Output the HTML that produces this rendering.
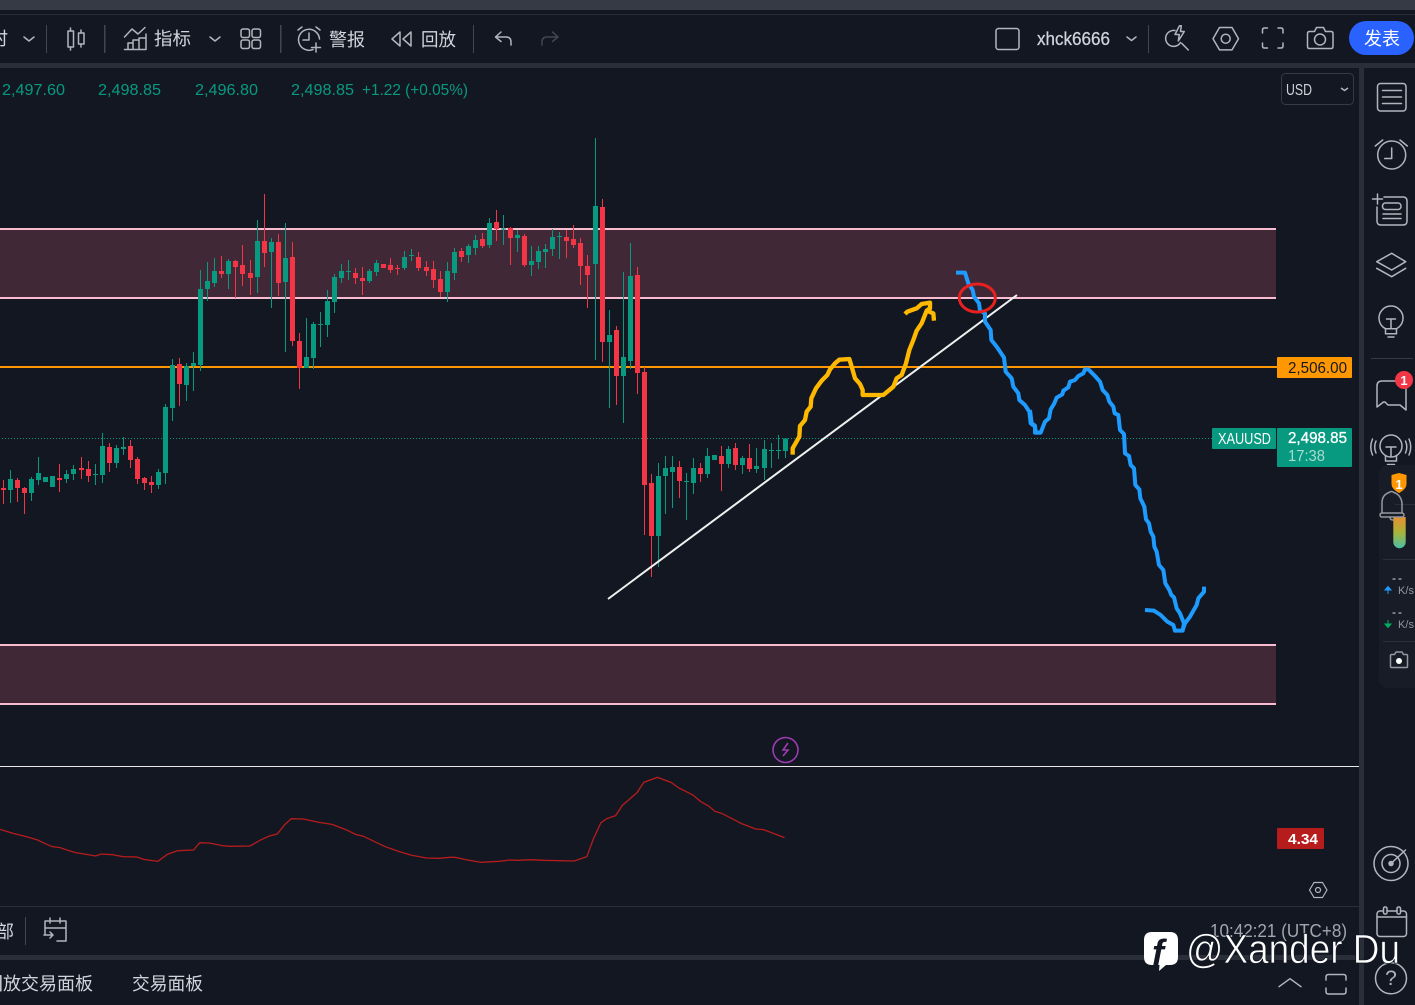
<!DOCTYPE html>
<html lang="zh"><head><meta charset="utf-8"><title>XAUUSD</title>
<style>
html,body{margin:0;padding:0;background:#131722;width:1415px;height:1005px;overflow:hidden}
svg{display:block;position:absolute;left:0;top:0}
text{font-family:"Liberation Sans","Noto Sans CJK SC",sans-serif}
.i{fill:none;stroke:#b2b5be;stroke-width:1.5;stroke-linecap:round;stroke-linejoin:round}
.cn{font-size:18px;fill:#d1d4dc}
.n{font-size:16px;fill:#089981}
</style></head><body>
<svg width="1415" height="1005" viewBox="0 0 1415 1005" xmlns="http://www.w3.org/2000/svg">
<rect width="1415" height="1005" fill="#131722"/>
<!-- top chrome -->
<rect width="1415" height="10" fill="#363a45"/>
<rect y="14" width="1415" height="1" fill="#2a2e39"/>
<rect y="63" width="1415" height="5" fill="#2a2e39"/>
<rect x="1359" y="68" width="5" height="937" fill="#2a2e39"/>
<rect y="955" width="1359" height="5" fill="#2a2e39"/>
<rect y="906" width="1359" height="1" fill="#2a2e39"/>
<!-- toolbar -->
<g fill="#434651"><rect x="46" y="25" width="1" height="28"/><rect x="104" y="25" width="1.5" height="28"/><rect x="280" y="25" width="1.5" height="28"/><rect x="473" y="25" width="1" height="28"/><rect x="1148" y="25" width="1" height="28"/></g>
<text x="-10" y="45" class="cn">时</text>
<path class="i" d="M24 37l5 4 5-4M210 37l5 4 5-4M1127 37l4.500 3.500 4.500-3.500"/>
<g class="i"><path d="M70.500 28v3M70.500 47v3M81 30v3M81 44v3"/><rect x="68" y="31" width="5.500" height="16"/><rect x="78.500" y="33" width="5.500" height="11"/></g>
<g class="i"><path d="M124.500 37L132 29l6 5 7-6.500"/><path d="M124.500 49.500h21.500V34M128 49v-6h5v6M133 49v-9h6v9M139 49v-11h6"/></g>
<text x="154" y="45" class="cn" textLength="37" lengthAdjust="spacingAndGlyphs">指标</text>
<g class="i"><rect x="241" y="29" width="8.500" height="8.500" rx="2"/><rect x="252" y="29" width="8.500" height="8.500" rx="2"/><rect x="241" y="40" width="8.500" height="8.500" rx="2"/><rect x="252" y="40" width="8.500" height="8.500" rx="2"/></g>
<g class="i"><path d="M313 49.500A10.500 10.500 0 1 1 319.500 39"/><path d="M309 33v7h-6M298 30l4-3M316 27l4 3M316 43v9M311.500 47.500h9"/></g>
<text x="329" y="46" class="cn" textLength="36" lengthAdjust="spacingAndGlyphs">警报</text>
<g class="i"><path d="M400 32l-8 7 8 7zM411 32l-8 7 8 7z"/></g>
<text x="421" y="46" class="cn" textLength="35" lengthAdjust="spacingAndGlyphs">回放</text>
<g class="i"><path d="M501 32l-5.500 5 5.500 4.500M496 37h10q5 0 5 5v3"/></g>
<g class="i" style="stroke:#434651"><path d="M552.500 32l5.500 5-5.500 4.500M558 37h-11q-5 0-5 5v3"/></g>
<rect x="996" y="28.500" width="23" height="21" rx="2.500" class="i"/>
<text x="1037" y="45" font-size="18" fill="#d1d4dc" stroke="#d1d4dc" stroke-width=".25" textLength="73" lengthAdjust="spacingAndGlyphs">xhck6666</text>
<g class="i"><path d="M1175 30.500A8 8 0 1 0 1180.500 42.500"/><path d="M1179.500 25.700L1175 34.500h4.300l-1 6.500 6-9.500h-3.800l.8-5.800zM1181.700 43.300l6.600 6.700"/></g>
<g class="i"><path d="M1213 38.700l6.500-11.200h12.500l6.500 11.200-6.500 11.200h-12.500z"/><circle cx="1225.700" cy="38.700" r="4.500"/></g>
<g class="i"><path d="M1262.500 33v-3q0-2 2-2h3M1278 28h3q2 0 2 2v3M1283 43v3q0 2-2 2h-3M1267.500 48h-3q-2 0-2-2v-3"/></g>
<g class="i"><path d="M1309.500 31.500h5l2-4h7l2 4h5.500q2 0 2 2v13q0 2-2 2h-21.500q-2 0-2-2v-13q0-2 2-2z"/><circle cx="1320" cy="39.500" r="5.500"/></g>
<rect x="1349" y="21" width="65" height="34" rx="17" fill="#2962ff"/>
<text x="1364" y="45" font-size="18" fill="#fff" textLength="36" lengthAdjust="spacingAndGlyphs">发表</text>
<!-- OHLC -->
<text x="2" y="95" class="n" textLength="63" lengthAdjust="spacingAndGlyphs">2,497.60</text>
<text x="98" y="95" class="n" textLength="63" lengthAdjust="spacingAndGlyphs">2,498.85</text>
<text x="195" y="95" class="n" textLength="63" lengthAdjust="spacingAndGlyphs">2,496.80</text>
<text x="291" y="95" class="n" textLength="63" lengthAdjust="spacingAndGlyphs">2,498.85</text>
<text x="362" y="95" class="n" textLength="106" lengthAdjust="spacingAndGlyphs">+1.22 (+0.05%)</text>
<rect x="1281.500" y="73.500" width="72" height="31" rx="4" fill="none" stroke="#363a45"/>
<text x="1286" y="95" font-size="15.500" fill="#d1d4dc" textLength="26" lengthAdjust="spacingAndGlyphs">USD</text>
<path d="M1341 88l3.500 2.500 3.500-2.500" fill="none" stroke="#b2b5be" stroke-width="1.500"/>
<!-- zones -->
<g shape-rendering="crispEdges">
<rect y="229" width="1276" height="69" fill="#402837"/>
<rect y="645" width="1276" height="59" fill="#402837"/>
<g fill="#f8bbd0"><rect y="228" width="1276" height="2"/><rect y="297" width="1276" height="2"/><rect y="644" width="1276" height="2"/><rect y="703" width="1276" height="2"/></g>
<rect y="366" width="1277" height="2" fill="#ff9800"/>
</g>
<line x1="2" y1="438.500" x2="1212" y2="438.500" stroke="#089981" stroke-dasharray="1 2"/>
<!-- candles -->
<g shape-rendering="crispEdges" fill="none">
<g transform="translate(0 190) scale(.33333)">
<path stroke="#089981" stroke-width="3" d="M31 840V939M94 861V933M115 801V885M136 861V876M157 858V891M199 840V879M220 825V870M286 822V885M307 729V879M349 765V834M370 741V795M475 837V897M496 642V882M517 507V693M559 519V633M580 486V603M601 240V543M622 216V333M643 204V291M685 207V297M772 90V309M814 144V354M856 99V486M919 384V534M940 396V537"/>
<path stroke="#089981" stroke-width="15" d="M31 867V900M94 867V909M115 849V870M136 861V876M157 858V891M199 852V867M220 837V852M286 852V855M307 768V855M349 774V819M370 771V777M475 846V885M496 651V849M517 525V654M559 528V585M580 519V528M601 297V525M622 273V297M643 243V279M685 213V252M772 153V261M814 156V186M856 204V276M919 501V534M940 402V504"/>
<path stroke="#f23645" stroke-width="3" d="M10 870V942M52 864V936M73 891V972M178 822V906M244 801V867M265 813V876M328 759V846M391 750V834M412 801V882M433 861V900M454 858V909M538 504V648M664 198V264M706 210V324M727 165V288M751 210V315M793 12V231M835 132V318M877 156V468M898 429V597"/>
<path stroke="#f23645" stroke-width="15" d="M10 894V900M52 870V894M73 894V909M178 864V870M244 834V840M265 837V858M328 771V819M391 768V810M412 807V867M433 864V879M454 876V885M538 522V582M664 243V252M706 213V231M727 225V252M751 249V264M793 153V189M835 156V279M877 201V453M898 453V534"/>
</g>
<g transform="translate(320 130) scale(.33333)">
<path stroke="#089981" stroke-width="3" d="M1 546V651M22 480V621M43 432V549M64 402V459M85 390V450M148 417V459M169 390V438M253 363V420M274 357V393M382 396V516M403 354V450M445 342V399M466 315V375M508 264V354M550 255V345M592 300V366M634 348V438M655 348V417M676 342V414M697 297V378M718 306V387M826 24V690M868 540V834M910 426V879M931 339V717"/>
<path stroke="#089981" stroke-width="15" d="M1 582V585M22 513V585M43 441V516M64 423V444M85 423V426M148 423V453M169 399V426M253 381V414M274 375V378M382 423V486M403 366V429M445 348V375M466 330V354M508 279V345M550 296V299M592 315V324M634 393V405M655 363V396M676 357V366M697 321V357M718 318V321M826 228V402M868 615V636M910 681V738M931 438V693"/>
<path stroke="#f23645" stroke-width="3" d="M106 414V462M127 411V495M190 402V414M211 384V429M232 405V435M295 366V423M319 393V438M340 393V474M361 423V501M424 354V396M487 309V354M529 240V333M571 291V405M613 312V411M739 300V384M760 285V354M781 324V465M802 375V534M847 207V696M889 588V825M952 411V792"/>
<path stroke="#f23645" stroke-width="15" d="M106 429V444M127 444V453M190 402V414M211 405V420M232 414V417M295 381V414M319 411V423M340 417V450M361 447V486M424 363V381M487 327V348M529 276V297M571 294V324M613 318V405M739 321V333M760 327V345M781 339V408M802 408V435M847 231V636M889 600V738M952 435V729"/>
</g>
<g transform="translate(590 350) scale(.33333)">
<path stroke="#089981" stroke-width="3" d="M205 339V651M226 318V492M247 318V474M289 369V510M310 324V432M352 294V384M415 288V354M457 318V372M499 294V369M523 270V390M544 279V354M565 255V327M586 265V324"/>
<path stroke="#089981" stroke-width="15" d="M205 378V558M226 354V378M247 351V366M289 393V396M310 354V399M352 318V372M373 315V330M415 297V342M457 324V345M499 348V357M523 297V354M544 300V303M565 300V303M586 265V303"/>
<path stroke="#f23645" stroke-width="3" d="M163 51V555M184 372V681M268 333V444M331 339V396M394 288V423M436 279V360M478 282V366"/>
<path stroke="#f23645" stroke-width="15" d="M163 66V405M184 399V558M268 351V393M331 354V372M394 318V342M436 294V345M478 324V357"/>
</g>
</g>
<!-- drawings -->
<line x1="608" y1="599" x2="1017" y2="295" stroke="#f0f0f0" stroke-width="2"/>
<g transform="translate(780 260) scale(.33333)" fill="none" stroke="#ffb800" stroke-width="13" stroke-linejoin="round">
<path d="M38 584L38 565L58 530L60 498L75 480L80 455L92 440L94 415L108 385L125 362L142 345L150 328L165 310L178 299L208 297L215 320L225 355L240 372L248 390L248 405L310 405L340 380L350 355L365 345L378 310L388 270L400 240L410 212L425 190L440 152L460 160L462 182"/>
<path d="M375 162L382 155L410 145L425 132L450 128L450 145L440 152"/>
</g>
<g transform="translate(780 260) scale(.33333)" fill="none" stroke="#1e9bff" stroke-width="12" stroke-linejoin="round">
<path d="M528 38L555 38L565 70L578 90L582 110L597 130L600 152L615 160L615 185L632 210L634 240L650 260L672 293L677 335L695 355L700 380L715 400L718 420L735 435L748 455L752 490L765 500L768 518L780 518"/>
</g>
<g transform="translate(1030 360) scale(.33333)" fill="none" stroke="#1e9bff" stroke-width="12" stroke-linejoin="round">
<path d="M0 150L5 190L15 197L15 218L32 218L45 185L57 175L62 148L72 132L80 113L97 103L100 92L115 82L120 65L135 60L145 48L160 40L165 28L175 28L195 48L210 65L218 90L232 105L238 125L250 140L254 160L265 165L270 210L282 222L285 280L297 288L302 315L312 325L316 375L328 388L331 415L343 440L348 478L357 490L362 515L370 530L373 560L380 575L387 615L400 630L406 670L418 690L424 705L432 712L440 745L450 760L462 790L458 812L435 812L430 795L412 785L392 765L372 752L345 750"/>
<path d="M458 810L465 790L480 770L500 735L505 715L522 695L522 680"/>
</g>
<ellipse cx="977.300" cy="298" rx="18" ry="14" fill="none" stroke="#e8201f" stroke-width="3"/>
<!-- price labels -->
<rect x="1277" y="357" width="75" height="21" rx="1" fill="#ff9800"/>
<text x="1288" y="373" font-size="15.500" fill="#131722" textLength="59" lengthAdjust="spacingAndGlyphs">2,506.00</text>
<rect x="1212" y="428" width="64" height="21" rx="1" fill="#089981"/>
<text x="1218" y="444" font-size="15.500" fill="#fff" textLength="53" lengthAdjust="spacingAndGlyphs">XAUUSD</text>
<rect x="1277" y="428" width="75" height="39" rx="1" fill="#089981"/>
<text x="1288" y="443" font-size="15.500" fill="#fff" stroke="#fff" stroke-width=".3" textLength="59" lengthAdjust="spacingAndGlyphs">2,498.85</text>
<text x="1288" y="461" font-size="15.500" fill="#a8dccf" textLength="37" lengthAdjust="spacingAndGlyphs">17:38</text>
<!-- sub pane -->
<path d="M785.500 737.500a12.500 12.500 0 1 0 .01 0z" fill="none" stroke="#9c3cb0" stroke-width="1.600"/>
<path d="M788 743l-5 7h5l-5 6" fill="none" stroke="#9c3cb0" stroke-width="1.600"/>
<rect y="766" width="1359" height="1" fill="#e8e8e8"/>
<g transform="translate(0 730) scale(.523 .33333)">
<path fill="none" stroke="#b71c1c" stroke-width="1.300" vector-effect="non-scaling-stroke" d="M0 298L25 310L50 320L72 330L85 340L100 350L115 353L130 361L145 368L165 373L183 378L193 372L215 374L235 380L262 381L275 388L302 394L320 373L340 362L370 360L382 338L400 339L425 347L440 349L478 348L497 331L515 318L530 312L545 283L557 266L580 267L610 277L635 283L660 298L680 313L695 319L735 349L760 363L785 375L815 384L840 385L860 382L870 382L890 389L920 397L955 394L975 390L990 391L1015 389L1040 391L1098 393L1122 380L1135 325L1149 278L1160 266L1177 257L1190 226L1218 188L1231 157L1257 142L1283 157L1298 174L1325 195L1340 215L1355 228L1367 244L1380 250L1418 281L1445 297L1460 299L1500 323"/>
</g>
<rect x="1277" y="828" width="47" height="21" rx="1" fill="#b71c1c"/>
<text x="1288" y="844" font-size="15" font-weight="bold" fill="#fff" textLength="30" lengthAdjust="spacingAndGlyphs">4.34</text>
<g class="i" style="stroke-width:1.200"><path d="M1309.500 890l4.500-7.500h8.500l4.500 7.500-4.500 7.500h-8.500z"/><circle cx="1318" cy="890" r="2.500"/></g>
<!-- bottom bars -->
<text x="-4" y="938" class="cn">部</text>
<rect x="25" y="917" width="1" height="28" fill="#434651"/>
<g class="i"><path d="M45 934v-13h21v20h-9M50 918v5M60 918v5M45 928h21M44 935h9M50 932l3 3-3 3"/></g>
<text x="-15" y="990" class="cn">回放交易面板</text>
<text x="132" y="990" class="cn" textLength="71" lengthAdjust="spacingAndGlyphs">交易面板</text>
<text x="1210" y="937" font-size="18" fill="#a3a6af" textLength="137" lengthAdjust="spacingAndGlyphs">10:42:21 (UTC+8)</text>
<path class="i" d="M1279 986.700l11-8 11 8"/>
<g class="i"><path d="M1326 980v-3q0-2.500 2.500-2.500h15q2.500 0 2.500 2.500v3M1326 988v3.500q0 2.500 2.500 2.500h15q2.500 0 2.500-2.500V988"/></g>
<!-- right sidebar -->
<g class="i">
<rect x="1377.500" y="83.500" width="28.500" height="27.500" rx="3"/><path d="M1382.500 90.500h19M1382.500 97h19M1382.500 103.500h19"/>
<circle cx="1391.700" cy="155" r="14"/><path d="M1391.700 148v10.500h-7M1375.300 146l7.400-6M1400 140l7.300 6"/>
<path d="M1377.500 194v10M1372.500 199h10M1384 197h19q4 0 4 4v20q0 4-4 4h-22q-4 0-4-4v-14"/><rect x="1382.500" y="203" width="18.500" height="6.500" rx="3"/><path d="M1383 214h18M1383 218.500h18"/>
<path d="M1376.700 261.700l15-8.400 14 8.400-14 8.300zM1376.700 268.300l15 8.400 14-8.400"/>
<path d="M1385.500 328.700A12 12 0 1 1 1396.500 328.700zM1385.500 328.700v5h11v-5M1388 337h6M1386.500 319h9M1391 319v9.700"/>
<path d="M1377 407V386q0-5 5-5h19q5 0 5 5v24l-6-5h-12l-3-3h-1.500l-6.500 5z"/>
<circle cx="1391" cy="446" r="11" fill="#131722"/><path d="M1385.500 456v5h11v-5M1387.500 464.500h7M1386 447h10M1391 447v9M1376 441a15 15 0 0 0 0 12M1372.500 439a20 20 0 0 0 0 16M1405.500 441a15 15 0 0 1 0 12M1409 439a20 20 0 0 1 0 16"/>
</g>
<rect x="1371" y="358" width="42" height="1" fill="#363a45"/>
<circle cx="1404" cy="380" r="9" fill="#f23645"/>
<text x="1404" y="385" font-size="13" font-weight="bold" fill="#fff" text-anchor="middle">1</text>
<path d="M1415 465h-26q-10 0-10 10v203q0 10 10 10h26z" fill="#181c27"/>
<rect x="1395" y="504" width="20" height="1" fill="#2a2e39"/>
<rect x="1383" y="559" width="32" height="1" fill="#2a2e39"/>
<rect x="1383" y="641" width="32" height="1" fill="#2a2e39"/>
<defs><linearGradient id="g" x1="0" y1="0" x2="0" y2="1"><stop offset="0" stop-color="#e8912d"/><stop offset=".5" stop-color="#a9b33a"/><stop offset="1" stop-color="#47c2a5"/></linearGradient></defs>
<path d="M1393.300 517h12.400v25a6.200 6.200 0 0 1-12.400 0z" fill="url(#g)"/>
<g class="i" style="stroke:#9598a1"><path d="M1382 513v-10q0-8 7-10.500q2.500-2 5 0q7 2.500 8 10.500v10"/><rect x="1380" y="513" width="24" height="4" rx="2"/><path d="M1390 517q0 3 3 3"/></g>
<path d="M1391.500 475l7.500-2 7.500 2v9q0 5-7.500 9-7.500-4-7.500-9z" fill="#ff9800"/>
<text x="1399" y="489" font-size="13" font-weight="bold" fill="#fff" text-anchor="middle">1</text>
<text x="1392" y="582" font-size="12" fill="#e0e3eb" textLength="10">--</text>
<text x="1398" y="594" font-size="11" fill="#9598a1" textLength="16">K/s</text>
<path d="M1388 594v-7M1385 590l3-3.500 3 3.500z" fill="#1e9bff" stroke="#1e9bff"/>
<text x="1392" y="616" font-size="12" fill="#e0e3eb" textLength="10">--</text>
<text x="1398" y="628" font-size="11" fill="#9598a1" textLength="16">K/s</text>
<path d="M1388 620v7M1385 624l3 3.500 3-3.500z" fill="#00b060" stroke="#00b060"/>
<path d="M1391.500 654.500h3l1.500-2.500h6l1.500 2.500h3q1 0 1 1v11q0 1-1 1h-15q-1 0-1-1v-11q0-1 1-1z" class="i" style="stroke:#9598a1"/>
<circle cx="1399" cy="661" r="3" fill="#fff"/>
<g class="i">
<circle cx="1391" cy="863.500" r="17"/><circle cx="1391" cy="863.500" r="9"/><circle cx="1391" cy="863.500" r="2" fill="#b2b5be"/><path d="M1391 863.500l14.500-13.500"/>
<rect x="1377" y="911" width="29.500" height="25.500" rx="3"/><path d="M1377 917h29.500"/><rect x="1383.500" y="907" width="3.500" height="7" rx="1.500" fill="#131722"/><rect x="1397" y="907" width="3.500" height="7" rx="1.500" fill="#131722"/>
<circle cx="1391" cy="978.300" r="15.500"/>
</g>
<text x="1391" y="985" font-size="21" fill="#b2b5be" text-anchor="middle">?</text>
<!-- watermark -->
<path d="M1152 932h18q8 0 8 8v17q0 8-8 8h-4l-7 6 .5-6h-7.500q-8 0-8-8v-17q0-8 8-8z" fill="#fff"/>
<text x="1152" y="965" font-size="36" font-weight="bold" font-style="italic" fill="#131722">f</text>
<text x="1186" y="963" font-size="41" fill="#fff" stroke="#131722" stroke-width=".7" textLength="214" lengthAdjust="spacingAndGlyphs">@Xander Du</text>
</svg>
</body></html>
